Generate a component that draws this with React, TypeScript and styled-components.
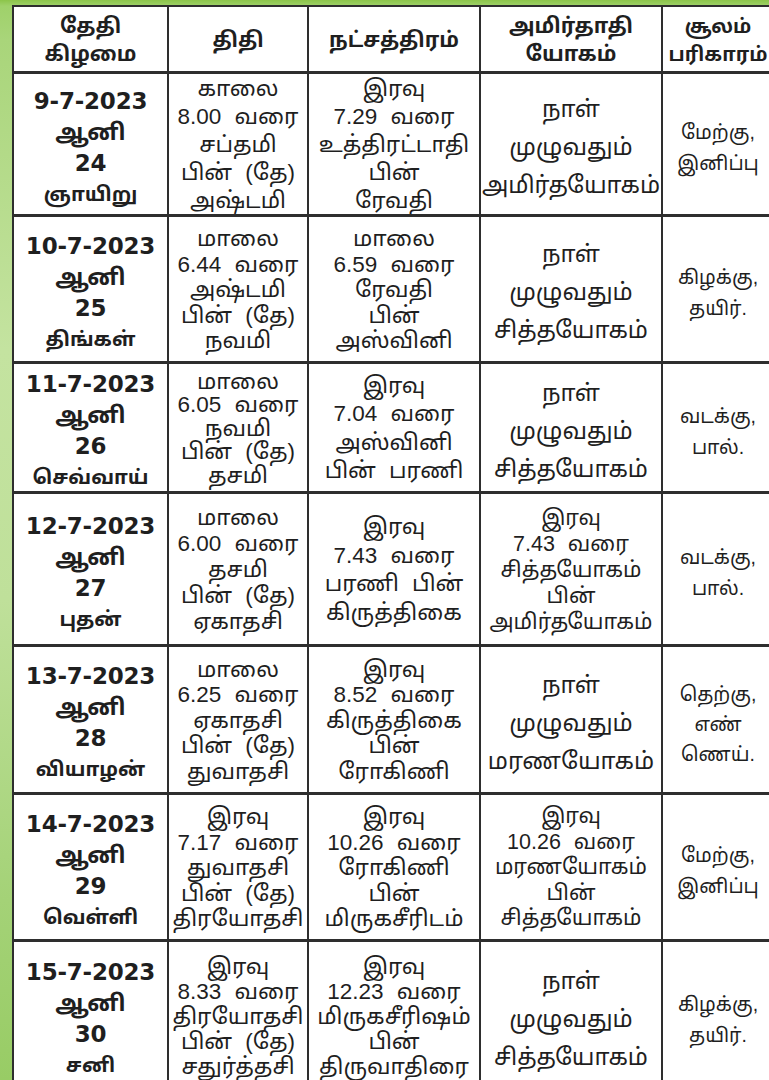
import React from "react";
import styled, { createGlobalStyle } from "styled-components";

const GlobalStyle = createGlobalStyle`
  html, body { margin: 0; padding: 0; background: #ffffff; }
  * { box-sizing: border-box; }
`;

const TAMIL = `"Liberation Sans", "Noto Sans Tamil", "Noto Sans Tamil UI", "Lohit Tamil", "Noto Sans", sans-serif`;

const Page = styled.div`
  width: 769px;
  height: 1080px;
  overflow: hidden;
  padding: 5px 0 0 12px;
  background: linear-gradient(
    180deg,
    #8cc54a 0px,
    #9fd16a 6px,
    #a9d57a 40px,
    #c4e3a0 350px,
    #bfe09a 600px,
    #a4d277 900px,
    #98cc65 1080px
  );
`;

const Table = styled.div`
  width: 800px;
  background: #ffffff;
  border-top: 2px solid #2e2e2e;
  border-left: 2px solid #2e2e2e;
  display: flex;
  flex-direction: column;
`;

const Row = styled.div<{ $h: number }>`
  display: grid;
  grid-template-columns: 155px 140px 172px 182px 112px;
  height: ${(p) => p.$h}px;
  border-bottom: 3px solid #2e2e2e;
  flex: none;
`;

const Cell = styled.div`
  border-right: 2.5px solid #2e2e2e;
  display: flex;
  flex-direction: column;
  align-items: center;
  justify-content: center;
  text-align: center;
  color: #1f1f1f;
  overflow: hidden;
`;

const HeadCell = styled(Cell)<{ $size?: number }>`
  font-family: ${TAMIL};
  font-weight: 700;
  font-size: ${(p) => p.$size ?? 21}px;
  line-height: 28px;
  padding-top: 2px;
`;

const DateCell = styled(Cell)`
  padding-top: 7px;
`;

const DateNum = styled.div`
  font-family: "DejaVu Sans", "Liberation Sans", sans-serif;
  font-weight: 700;
  font-size: 23px;
  line-height: 31px;
  letter-spacing: -0.2px;
  white-space: nowrap;
`;

const DateTamil = styled.div<{ $big?: boolean }>`
  font-family: ${TAMIL};
  font-weight: 700;
  font-size: ${(p) => (p.$big ? 23 : 20)}px;
  line-height: 31px;
  white-space: nowrap;
`;

const TextCell = styled(Cell)<{ $lh: number; $size: number; $pt?: number }>`
  font-family: ${TAMIL};
  font-size: ${(p) => p.$size}px;
  line-height: ${(p) => p.$lh}px;
  word-spacing: 7px;
  padding-top: ${(p) => p.$pt ?? 2}px;
`;

const Line = styled.div`
  white-space: nowrap;
`;

type RowData = {
  h: number;
  lh5: number;
  date: string;
  month: string;
  day: string;
  weekday: string;
  thithi: string[];
  star: string[];
  yoga: string[];
  soolam: string[];
};

const rows: RowData[] = [
  {
    h: 143,
    lh5: 28,
    date: "9-7-2023",
    month: "ஆனி",
    day: "24",
    weekday: "ஞாயிறு",
    thithi: ["காலை", "8.00 வரை", "சப்தமி", "பின் (தே)", "அஷ்டமி"],
    star: ["இரவு", "7.29 வரை", "உத்திரட்டாதி", "பின்", "ரேவதி"],
    yoga: ["நாள்", "முழுவதும்", "அமிர்தயோகம்"],
    soolam: ["மேற்கு,", "இனிப்பு"],
  },
  {
    h: 147,
    lh5: 25.5,
    date: "10-7-2023",
    month: "ஆனி",
    day: "25",
    weekday: "திங்கள்",
    thithi: ["மாலை", "6.44 வரை", "அஷ்டமி", "பின் (தே)", "நவமி"],
    star: ["மாலை", "6.59 வரை", "ரேவதி", "பின்", "அஸ்வினி"],
    yoga: ["நாள்", "முழுவதும்", "சித்தயோகம்"],
    soolam: ["கிழக்கு,", "தயிர்."],
  },
  {
    h: 130,
    lh5: 23.5,
    date: "11-7-2023",
    month: "ஆனி",
    day: "26",
    weekday: "செவ்வாய்",
    thithi: ["மாலை", "6.05 வரை", "நவமி", "பின் (தே)", "தசமி"],
    star: ["இரவு", "7.04 வரை", "அஸ்வினி", "பின் பரணி"],
    yoga: ["நாள்", "முழுவதும்", "சித்தயோகம்"],
    soolam: ["வடக்கு,", "பால்."],
  },
  {
    h: 153,
    lh5: 26,
    date: "12-7-2023",
    month: "ஆனி",
    day: "27",
    weekday: "புதன்",
    thithi: ["மாலை", "6.00 வரை", "தசமி", "பின் (தே)", "ஏகாதசி"],
    star: ["இரவு", "7.43 வரை", "பரணி பின்", "கிருத்திகை"],
    yoga: ["இரவு", "7.43 வரை", "சித்தயோகம்", "பின்", "அமிர்தயோகம்"],
    soolam: ["வடக்கு,", "பால்."],
  },
  {
    h: 148,
    lh5: 25.5,
    date: "13-7-2023",
    month: "ஆனி",
    day: "28",
    weekday: "வியாழன்",
    thithi: ["மாலை", "6.25 வரை", "ஏகாதசி", "பின் (தே)", "துவாதசி"],
    star: ["இரவு", "8.52 வரை", "கிருத்திகை", "பின்", "ரோகிணி"],
    yoga: ["நாள்", "முழுவதும்", "மரணயோகம்"],
    soolam: ["தெற்கு,", "எண்", "ணெய்."],
  },
  {
    h: 147,
    lh5: 25.5,
    date: "14-7-2023",
    month: "ஆனி",
    day: "29",
    weekday: "வெள்ளி",
    thithi: ["இரவு", "7.17 வரை", "துவாதசி", "பின் (தே)", "திரயோதசி"],
    star: ["இரவு", "10.26 வரை", "ரோகிணி", "பின்", "மிருகசீரிடம்"],
    yoga: ["இரவு", "10.26 வரை", "மரணயோகம்", "பின்", "சித்தயோகம்"],
    soolam: ["மேற்கு,", "இனிப்பு"],
  },
  {
    h: 150,
    lh5: 25,
    date: "15-7-2023",
    month: "ஆனி",
    day: "30",
    weekday: "சனி",
    thithi: ["இரவு", "8.33 வரை", "திரயோதசி", "பின் (தே)", "சதுர்த்தசி"],
    star: ["இரவு", "12.23 வரை", "மிருகசீரிஷம்", "பின்", "திருவாதிரை"],
    yoga: ["நாள்", "முழுவதும்", "சித்தயோகம்"],
    soolam: ["கிழக்கு,", "தயிர்."],
  },
];

const Lines: React.FC<{ items: string[] }> = ({ items }) => (
  <>
    {items.map((t, i) => (
      <Line key={i}>{t}</Line>
    ))}
  </>
);

export default function App() {
  return (
    <>
      <GlobalStyle />
      <Page>
        <Table>
          <Row $h={67}>
            <HeadCell>
              <Line>தேதி</Line>
              <Line>கிழமை</Line>
            </HeadCell>
            <HeadCell>
              <Line>திதி</Line>
            </HeadCell>
            <HeadCell>
              <Line>நட்சத்திரம்</Line>
            </HeadCell>
            <HeadCell>
              <Line>அமிர்தாதி</Line>
              <Line>யோகம்</Line>
            </HeadCell>
            <HeadCell $size={19.5}>
              <Line>சூலம்</Line>
              <Line>பரிகாரம்</Line>
            </HeadCell>
          </Row>
          {rows.map((r) => {
            const bigYoga = r.yoga.length === 3;
            return (
              <Row key={r.date} $h={r.h}>
                <DateCell>
                  <DateNum>{r.date}</DateNum>
                  <DateTamil $big>{r.month}</DateTamil>
                  <DateNum>{r.day}</DateNum>
                  <DateTamil>{r.weekday}</DateTamil>
                </DateCell>
                <TextCell $size={22.5} $lh={r.lh5}>
                  <Lines items={r.thithi} />
                </TextCell>
                <TextCell $size={22.5} $lh={r.star.length === 4 ? 28.5 : r.lh5}>
                  <Lines items={r.star} />
                </TextCell>
                {bigYoga ? (
                  <TextCell $size={23.5} $lh={38} $pt={6}>
                    <Lines items={r.yoga} />
                  </TextCell>
                ) : (
                  <TextCell $size={21.5} $lh={r.lh5}>
                    <Lines items={r.yoga} />
                  </TextCell>
                )}
                <TextCell $size={19.5} $lh={r.soolam.length === 3 ? 30 : 31} $pt={8}>
                  <Lines items={r.soolam} />
                </TextCell>
              </Row>
            );
          })}
        </Table>
      </Page>
    </>
  );
}
